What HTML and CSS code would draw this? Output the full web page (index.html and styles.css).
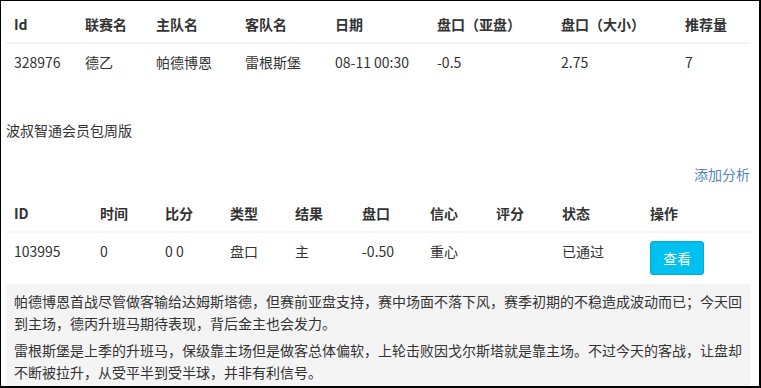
FILE: index.html
```html
<!DOCTYPE html>
<html lang="zh-CN">
<head>
<meta charset="utf-8">
<title>比赛分析</title>
<link rel="stylesheet" href="styles.css">
</head>
<body>
<div class="frame">
  <table class="tbl tbl-match">
    <colgroup>
      <col class="w71"><col class="w71"><col class="w89"><col class="w90"><col class="w102"><col class="w124"><col class="w124"><col>
    </colgroup>
    <thead>
      <tr><th>Id</th><th>联赛名</th><th>主队名</th><th>客队名</th><th>日期</th><th>盘口（亚盘）</th><th>盘口（大小）</th><th>推荐量</th></tr>
    </thead>
    <tbody>
      <tr><td>328976</td><td>德乙</td><td>帕德博恩</td><td>雷根斯堡</td><td>08-11 00:30</td><td>-0.5</td><td>2.75</td><td>7</td></tr>
    </tbody>
  </table>

  <div class="pkg">波叔智通会员包周版</div>

  <div class="actions"><a class="add-link" href="#">添加分析</a></div>

  <table class="tbl tbl-analysis">
    <colgroup>
      <col class="w86"><col class="w65"><col class="w65"><col class="w65"><col class="w67"><col class="w68"><col class="w66"><col class="w66"><col class="w88"><col>
    </colgroup>
    <thead>
      <tr><th>ID</th><th>时间</th><th>比分</th><th>类型</th><th>结果</th><th>盘口</th><th>信心</th><th>评分</th><th>状态</th><th>操作</th></tr>
    </thead>
    <tbody>
      <tr><td>103995</td><td>0</td><td>0 0</td><td>盘口</td><td>主</td><td>-0.50</td><td>重心</td><td></td><td>已通过</td><td><button class="btn-info" type="button">查看</button></td></tr>
    </tbody>
  </table>

  <div class="analysis">
    <p>帕德博恩首战尽管做客输给达姆斯塔德，但赛前亚盘支持，赛中场面不落下风，赛季初期的不稳造成波动而已；今天回到主场，德丙升班马期待表现，背后金主也会发力。</p>
    <p>雷根斯堡是上季的升班马，保级靠主场但是做客总体偏软，上轮击败因戈尔斯塔就是靠主场。不过今天的客战，让盘却不断被拉升，从受平半到受半球，并非有利信号。</p>
  </div>
</div>
</body>
</html>
```

FILE: styles.css
```css
html, body {
  margin: 0;
  padding: 0;
  background: #fff;
}

body {
  font-family: "Noto Sans CJK SC", "Liberation Sans", sans-serif;
  font-size: 14px;
  line-height: 20px;
  color: #333;
}

.frame {
  box-sizing: border-box;
  width: 761px;
  height: 388px;
  overflow: hidden;
  border-style: solid;
  border-color: #000;
  border-width: 1px 2px 2px 1px;
  padding: 5px 9px 0 5px;
}

.tbl {
  width: 100%;
  border-collapse: collapse;
  table-layout: fixed;
}

.tbl th,
.tbl td {
  padding: 8px;
  text-align: left;
  vertical-align: top;
  white-space: nowrap;
}

.tbl th {
  font-weight: bold;
  border-bottom: 2px solid #f4f4f4;
}

.w65 { width: 65px; }
.w66 { width: 66px; }
.w67 { width: 67px; }
.w68 { width: 68px; }
.w71 { width: 71px; }
.w86 { width: 86px; }
.w88 { width: 88px; }
.w89 { width: 89px; }
.w90 { width: 90px; }
.w102 { width: 102px; }
.w124 { width: 124px; }

.pkg {
  margin-top: 40px;
}

.actions {
  margin-top: 24px;
  text-align: right;
}

.add-link {
  color: #4f87c0;
  text-decoration: none;
}

.tbl-analysis {
  margin-top: 11px;
}

.btn-info {
  font-family: "Noto Sans CJK SC", "Liberation Sans", sans-serif;
  font-size: 14px;
  line-height: 20px;
  padding: 6px 12px;
  color: #fff;
  background: #00c0ef;
  border: 1px solid #00acd6;
  border-radius: 3px;
}

.analysis {
  margin-top: 1px;
  background: #f4f4f4;
  padding: 6px 8px 4px;
  line-height: 22px;
}

.analysis p {
  margin: 0 0 5px;
}
```
